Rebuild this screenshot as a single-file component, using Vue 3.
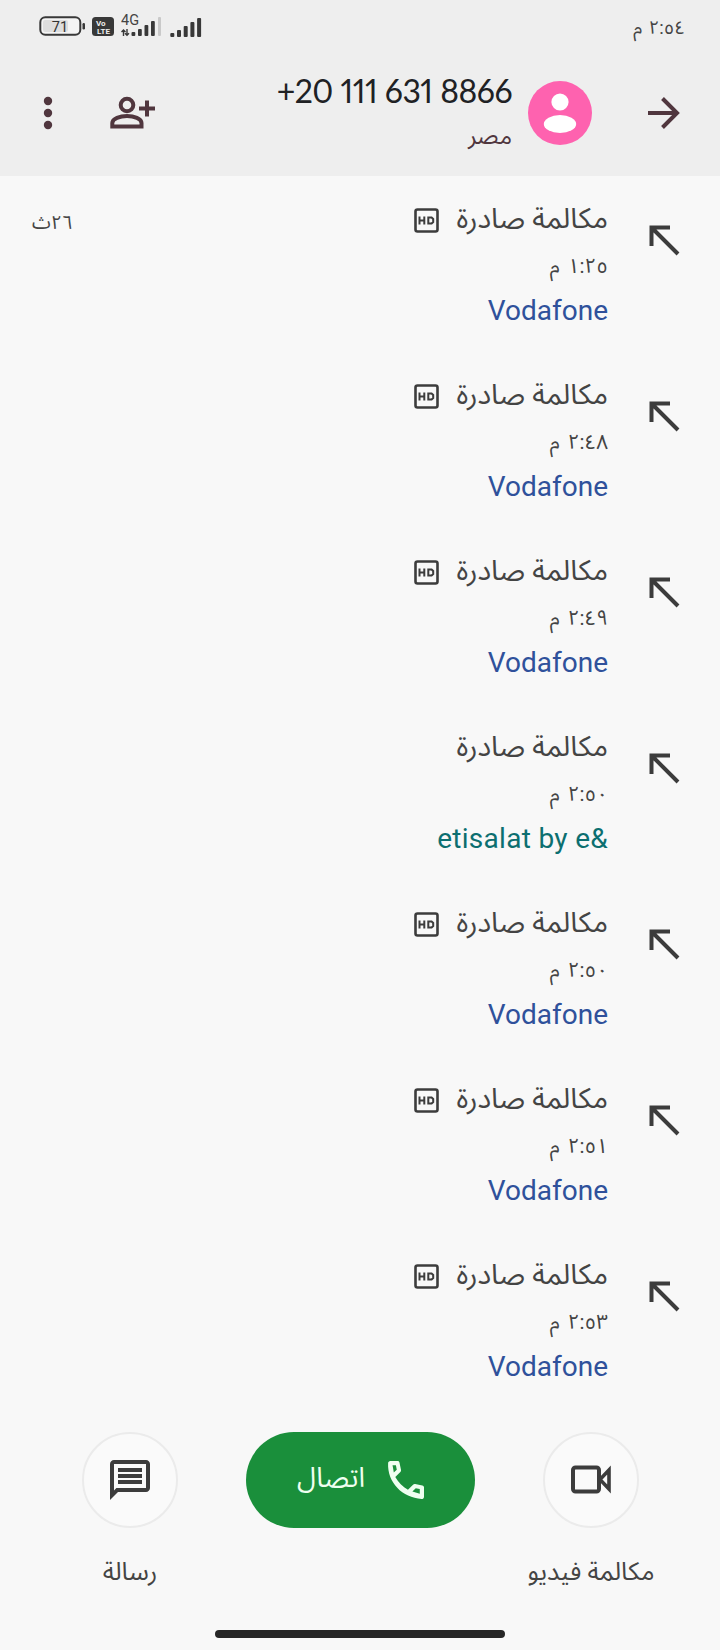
<template>
  <div class="screen" dir="rtl">
    <!-- status bar -->
    <div class="status-bar" dir="ltr">
      <div class="status-icons">
        <svg class="battery" width="48" height="22" viewBox="0 0 48 22">
          <rect x="2.3" y="2.3" width="40" height="17.5" rx="5" fill="#f4f4f4" stroke="#383838" stroke-width="2" />
          <rect x="5" y="5" width="25" height="12" rx="2" fill="#dedede" />
          <rect x="44.5" y="8" width="2.5" height="6.5" rx="1.2" fill="#383838" />
          <text x="22" y="16.5" text-anchor="middle" font-size="14.5" fill="#333">71</text>
        </svg>
        <svg class="volte" width="22" height="19" viewBox="0 0 22 19">
          <rect width="22" height="19" rx="3.5" fill="#383838" />
          <text x="4" y="9" font-size="8" font-weight="700" fill="#eee">Vo</text>
          <text x="5" y="16.6" font-size="8" font-weight="700" fill="#eee">LTE</text>
        </svg>
        <svg class="signal-4g" width="42" height="26" viewBox="0 0 42 26">
          <text x="0" y="14" font-size="14.5" fill="#444">4G</text>
          <path d="M2.5 25v-6M0.5 21l2-2 2 2M6 18v6M4 22.3l2 2 2-2" fill="none" stroke="#383838" stroke-width="1.4" />
          <rect x="10.5" y="21" width="3.8" height="4" rx="1" fill="#383838" />
          <rect x="17" y="18" width="3.8" height="7" rx="1" fill="#383838" />
          <rect x="23.5" y="14" width="3.8" height="11" rx="1" fill="#383838" />
          <rect x="30" y="10" width="3.8" height="15" rx="1" fill="#383838" />
          <rect x="37" y="6" width="3" height="19" rx="1" fill="#c9c9c9" />
        </svg>
        <svg class="signal" width="32" height="20" viewBox="0 0 32 20">
          <rect v-for="(h, i) in [4, 7, 11, 15, 19]" :key="h" :x="i * 6.7 + 0.3" :y="20 - h" width="4" :height="h" rx="1" fill="#383838" />
        </svg>
      </div>
      <div class="clock" dir="rtl">٢:٥٤ م</div>
    </div>

    <!-- contact header -->
    <header class="header">
      <svg class="back" width="34" height="34" viewBox="0 0 34 34">
        <path d="M2 17H30M16.5 2.5L31 17L16.5 31.5" fill="none" stroke="#50363e" stroke-width="4" />
      </svg>
      <svg class="avatar" width="64" height="64" viewBox="0 0 64 64">
        <circle cx="32" cy="32" r="32" fill="#fe62af" />
        <circle cx="32" cy="21" r="8.6" fill="#fff" />
        <ellipse cx="32" cy="43" rx="16.2" ry="9" fill="#fff" />
      </svg>
      <div class="contact">
        <div class="number" dir="ltr">+20 111 631 8866</div>
        <div class="country">مصر</div>
      </div>
      <svg class="add-person" width="46" height="36" viewBox="0 0 46 36">
        <circle cx="17" cy="9" r="6.3" fill="none" stroke="#50363e" stroke-width="4" />
        <path d="M2.3 30.5V27C2.3 22.5 10 20 17 20S31.5 22.5 31.5 27V30.5Z" fill="none" stroke="#50363e" stroke-width="4" />
        <path d="M29 12.5H45M37 4.5V20.5" stroke="#50363e" stroke-width="4" />
      </svg>
      <svg class="more" width="10" height="34" viewBox="0 0 10 34">
        <circle v-for="y in [5, 17, 29]" :key="y" cx="5" :cy="y" r="4.2" fill="#50363e" />
      </svg>
    </header>

    <!-- call history -->
    <main class="calls">
      <div v-for="(call, i) in calls" :key="i" class="call">
        <svg class="outgoing" width="31" height="31" viewBox="0 0 31 31">
          <path d="M21 2.5H2.5V21M2.5 2.5L29 29" fill="none" stroke="#3c3c3c" stroke-width="4" />
        </svg>
        <div class="call-info">
          <div class="call-title">
            <span class="call-name">مكالمة صادرة</span>
            <svg v-if="call.hd" class="hd" width="25" height="25" viewBox="0 0 25 25">
              <rect x="1.5" y="1.5" width="22" height="22" rx="2" fill="none" stroke="#3c3c3c" stroke-width="2.6" />
              <path d="M5.5 8.5V16.5M5.5 12.5H10.3M10.3 8.5V16.5M14.3 9.5H17.6L19.2 11V14L17.6 15.5H14.3Z" fill="none" stroke="#3c3c3c" stroke-width="2" />
            </svg>
          </div>
          <div class="call-time">{{ call.time }}</div>
          <div class="carrier" :class="{ etisalat: !call.hd }" dir="ltr">{{ call.carrier }}</div>
        </div>
        <div v-if="call.duration" class="duration">{{ call.duration }}</div>
      </div>
    </main>

    <!-- bottom actions -->
    <footer class="actions">
      <div class="action video">
        <div class="round">
          <svg width="42" height="30" viewBox="0 0 42 30">
            <rect x="3" y="2.5" width="26" height="24" rx="2.5" fill="none" stroke="#3c3c3c" stroke-width="4" />
            <path d="M39 5V24L30 14.5Z" fill="none" stroke="#3c3c3c" stroke-width="3.6" />
          </svg>
        </div>
        <span class="action-label">مكالمة فيديو</span>
      </div>
      <div class="call-btn">
        <svg width="38" height="38" viewBox="3 3 18 18">
          <path d="M4 4C4 3.5 4.5 3 5 3H8.5C9 3 9.3 3.3 9.4 3.8L10.1 7.2C10.2 7.6 10.1 8 9.8 8.2L7.4 10.6C8.8 13.1 10.9 15.2 13.4 16.6L15.8 14.2C16.1 13.9 16.5 13.8 16.8 13.9L20.2 14.6C20.7 14.7 21 15.1 21 15.6V19.9C21 20.6 20.5 21 19.9 21C10.8 20.5 3.5 13.2 4 4ZM6.1 5L6.7 8.5L8.1 7.1L7.7 5ZM19 16.3L17.1 15.9L15.5 17.5L19 18.5Z" fill="#effff0" fill-rule="evenodd" />
        </svg>
        <span class="call-label">اتصال</span>
      </div>
      <div class="action message">
        <div class="round">
          <svg width="40" height="40" viewBox="2 2 20 20">
            <path d="M4 4H20V16H5.2L4 17.2V4M4 2C2.9 2 2 2.9 2 4V22L6 18H20C21.1 18 22 17.1 22 16V4C22 2.9 21.1 2 20 2Z M6 12H18V14H6ZM6 9H18V11H6ZM6 6H18V8H6Z" fill="#3c3c3c" fill-rule="evenodd" />
          </svg>
        </div>
        <span class="action-label">رسالة</span>
      </div>
    </footer>
    <div class="home-bar"></div>
  </div>
</template>

<script setup>
const calls = [
  { time: '١:٢٥ م', carrier: 'Vodafone', hd: true, duration: '٢٦ث' },
  { time: '٢:٤٨ م', carrier: 'Vodafone', hd: true },
  { time: '٢:٤٩ م', carrier: 'Vodafone', hd: true },
  { time: '٢:٥٠ م', carrier: 'etisalat by e&', hd: false },
  { time: '٢:٥٠ م', carrier: 'Vodafone', hd: true },
  { time: '٢:٥١ م', carrier: 'Vodafone', hd: true },
  { time: '٢:٥٣ م', carrier: 'Vodafone', hd: true }
]
</script>

<style>
body {
  margin: 0;
  background: #f8f8f8;
}
</style>

<style scoped>
.screen {
  width: 720px;
  height: 1650px;
  overflow: hidden;
  display: flex;
  flex-direction: column;
  background: #f8f8f8;
  color: #444;
  font-family: Roboto, "Noto Sans Arabic", "DejaVu Sans", sans-serif;
}

.screen svg {
  display: block;
  flex: none;
}

.status-bar {
  box-sizing: border-box;
  height: 54px;
  padding: 0 35px 0 38px;
  display: flex;
  justify-content: space-between;
  background: #eeeeee;
}

.status-icons {
  display: flex;
  align-items: flex-end;
  height: 37px;
}

.volte {
  margin-left: 6px;
  margin-bottom: 1px;
}

.signal-4g {
  margin-left: 7px;
}

.signal {
  margin-left: 7px;
}

.clock {
  font-size: 18.5px;
  line-height: 56px;
  word-spacing: 2px;
}

.header {
  box-sizing: border-box;
  height: 122px;
  padding: 0 40px 0 43px;
  display: flex;
  background: #eeeeee;
}

.back {
  margin-top: 42px;
}

.avatar {
  margin-top: 27px;
  margin-right: 54px;
}

.contact {
  flex: 1;
  margin-right: 16px;
}

.number {
  margin-top: 16px;
  text-align: right;
  font-family: Lato, sans-serif;
  font-size: 32px;
  line-height: 42px;
  font-feature-settings: "pnum";
  letter-spacing: -0.5px;
  color: #202124;
  white-space: nowrap;
}

.country {
  font-size: 23.5px;
  line-height: 40px;
  margin-top: 4px;
  color: #50363e;
}

.add-person {
  margin-top: 42px;
  margin-left: 57px;
}

.more {
  margin-top: 42px;
}

.call {
  box-sizing: border-box;
  height: 176px;
  padding: 0 40px 0 32px;
  display: flex;
}

.outgoing {
  margin-top: 49px;
}

.call-info {
  flex: 1;
  margin-right: 41px;
}

.call-title {
  display: flex;
  align-items: center;
  gap: 17px;
  height: 44px;
  margin-top: 22px;
  font-size: 28.6px;
}

.call-name {
  position: relative;
  top: -1px;
}

.call-time {
  height: 44px;
  line-height: 49px;
  font-size: 20.5px;
  word-spacing: 3px;
}

.carrier {
  height: 44px;
  line-height: 50px;
  text-align: right;
  font-size: 28px;
  color: #2f519b;
}

.carrier.etisalat {
  color: #0c6f70;
  letter-spacing: 0.3px;
}

.duration {
  margin-top: 24px;
  font-size: 19px;
  line-height: 45px;
}

.actions {
  display: flex;
  justify-content: space-between;
  height: 204px;
  padding: 24px 39px 0 40px;
  box-sizing: border-box;
}

.action {
  display: flex;
  flex-direction: column;
  align-items: center;
  width: 180px;
}

.round {
  box-sizing: border-box;
  width: 96px;
  height: 96px;
  border: 2px solid #ebebeb;
  border-radius: 50%;
  background: #fafafa;
  display: flex;
  align-items: center;
  justify-content: center;
}

.action-label {
  font-size: 25.3px;
  line-height: 40px;
  margin-top: 24px;
  white-space: nowrap;
}

.call-btn {
  width: 229px;
  height: 96px;
  border-radius: 48px;
  background: #1a8f3b;
  color: #effff0;
  display: flex;
  align-items: center;
  justify-content: center;
  gap: 21px;
  font-size: 27.5px;
}

.call-label {
  margin-bottom: 5px;
}

.home-bar {
  width: 290px;
  height: 8px;
  border-radius: 4px;
  margin: 18px auto 0;
  background: #262626;
}
</style>
